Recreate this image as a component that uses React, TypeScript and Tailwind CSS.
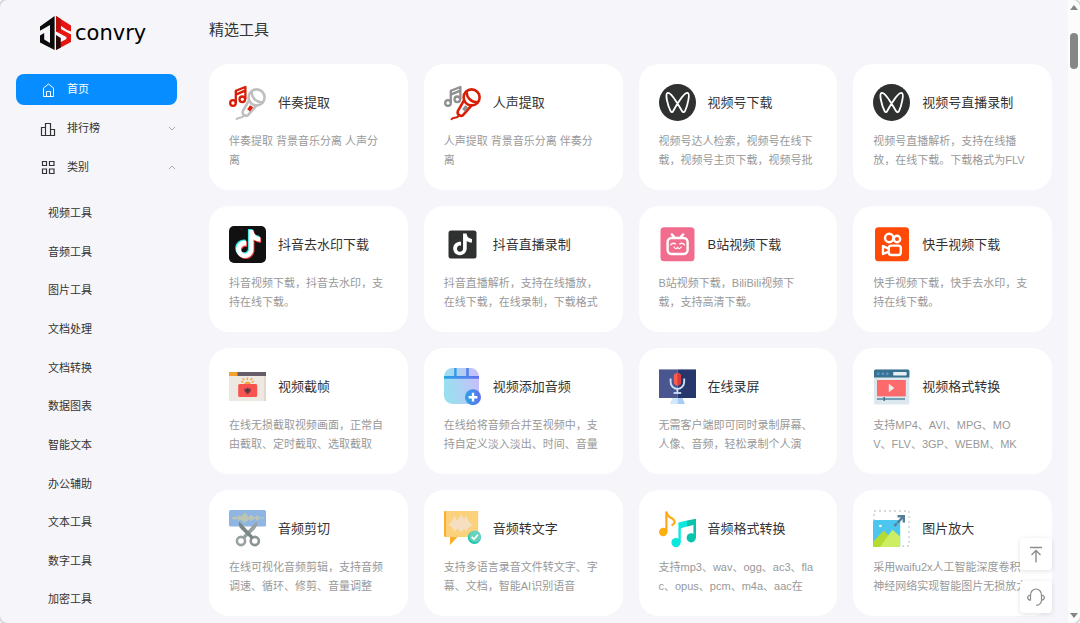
import {ReactNode} from "react";

type Tool = {
    name: string;
    lines: string[];
    icon: ReactNode;
}

const notePath = "M12.525.02c1.31-.02 2.61-.01 3.91-.02.08 1.53.63 3.09 1.75 4.17 1.12 1.11 2.7 1.62 4.24 1.79v4.03c-1.44-.05-2.89-.35-4.2-.97-.57-.26-1.1-.59-1.62-.93-.01 2.92.01 5.84-.02 8.75-.08 1.4-.54 2.79-1.35 3.94-1.31 1.92-3.58 3.17-5.91 3.21-1.43.08-2.86-.31-4.08-1.03-2.02-1.19-3.44-3.37-3.65-5.71-.02-.5-.03-1-.01-1.49.18-1.9 1.12-3.72 2.58-4.96 1.66-1.44 3.98-2.13 6.15-1.72.02 1.48-.04 2.96-.04 4.44-.99-.32-2.15-.23-3.02.37-.63.41-1.11 1.04-1.36 1.75-.21.51-.15 1.07-.14 1.61.24 1.64 1.82 3.02 3.5 2.87 1.12-.01 2.19-.66 2.77-1.61.19-.33.4-.67.41-1.06.1-1.79.06-3.57.07-5.36.01-4.03-.01-8.05.02-12.07z";

function Svg({children}: { children: ReactNode }) {
    return (
        <svg viewBox="0 0 37 37" className="size-[37px] shrink-0" fill="none" aria-hidden="true">
            {children}
        </svg>
    );
}

function MicIcon({notes, mic, slot}: { notes: string, mic: string, slot: string }) {
    return (
        <Svg>
            <g stroke={notes} strokeWidth="2.3">
                <circle cx="4" cy="19" r="2.8"/>
                <circle cx="13.3" cy="15.3" r="2.8"/>
                <path d="M6.8 19V6.8L16.4 3V15.3M6.8 10.6L16.1 6.6" strokeLinejoin="round"/>
            </g>
            <g stroke={mic} strokeWidth="2.6" strokeLinecap="round" strokeLinejoin="round">
                <circle cx="27.6" cy="13.4" r="8"/>
                <path d="M22.5 8.2C23 14 27 18 33.4 18.4"/>
                <path d="M20 16.4L13.8 27.2C13 30.4 16 33 18.8 31.4L27.6 21.4"/>
                <path d="M15 31.4C12.6 35.4 10 32.4 7.6 35.2" strokeWidth="2"/>
            </g>
            <path d="M22.6 22.2L19.6 26.4" stroke={slot} strokeWidth="3.6"/>
        </Svg>
    );
}

function ChannelsIcon() {
    return (
        <Svg>
            <circle cx="18.5" cy="18.5" r="18.5" fill="#2f3130"/>
            <path
                d="M11.4 26.6C9 22 5.6 9.4 8.6 8.8C12 8.2 15.6 15 18.5 19.6L23 27C24 28.6 25.4 28.4 26.2 26.6C28.4 22 31.6 9.4 28.6 8.8C25.2 8.2 21.6 15 18.5 19.6L14.2 27C13.4 28.6 12.2 28.4 11.4 26.6z"
                stroke="#fff" strokeWidth="1.8"/>
        </Svg>
    );
}

const tools: Tool[] = [
    {
        name: "伴奏提取",
        lines: ["伴奏提取 背景音乐分离 人声分", "离"],
        icon: <MicIcon notes="#d81e06" mic="#bfbfbf" slot="#d81e06"/>,
    },
    {
        name: "人声提取",
        lines: ["人声提取 背景音乐分离 伴奏分", "离"],
        icon: <MicIcon notes="#8f8f8f" mic="#d81e06" slot="#8f8f8f"/>,
    },
    {
        name: "视频号下载",
        lines: ["视频号达人检索，视频号在线下", "载，视频号主页下载，视频号批"],
        icon: <ChannelsIcon/>,
    },
    {
        name: "视频号直播录制",
        lines: ["视频号直播解析，支持在线播", "放，在线下载。下载格式为FLV"],
        icon: <ChannelsIcon/>,
    },
    {
        name: "抖音去水印下载",
        lines: ["抖音视频下载，抖音去水印，支", "持在线下载。"],
        icon: (
            <Svg>
                <rect width="37" height="37" rx="5" fill="#111"/>
                <path d={notePath} fill="#25e5e0" transform="translate(4.4 3) scale(1.16)"/>
                <path d={notePath} fill="#f0443c" transform="translate(6.2 5.2) scale(1.16)"/>
                <path d={notePath} fill="#fff" transform="translate(5.3 4.1) scale(1.16)"/>
            </Svg>
        ),
    },
    {
        name: "抖音直播录制",
        lines: ["抖音直播解析，支持在线播放，", "在线下载，在线录制，下载格式"],
        icon: (
            <Svg>
                <rect x="4.5" y="4.5" width="28" height="28" rx="2.5" fill="#2f3130"/>
                <path d={notePath} fill="#fff" transform="translate(7.8 7.6) scale(.9)"/>
            </Svg>
        ),
    },
    {
        name: "B站视频下载",
        lines: ["B站视频下载，BiliBili视频下", "载，支持高清下载。"],
        icon: (
            <Svg>
                <rect x="1.5" y="1.2" width="34" height="34" rx="3.5" fill="#f16c8d"/>
                <g stroke="#fff" strokeLinecap="round">
                    <rect x="8.6" y="12" width="20" height="16" rx="4" strokeWidth="2.4"/>
                    <path d="M12.8 8.4L15.2 11M24.2 8.4L21.8 11" strokeWidth="2.4"/>
                    <path d="M11.8 18.8Q14 16.2 16.4 17.8M25.4 18.8Q23.2 16.2 20.8 17.8" strokeWidth="1.4"/>
                    <path d="M15 21Q17 24 18.6 21.4Q20.2 24 22.2 21" strokeWidth="1.2"/>
                </g>
            </Svg>
        ),
    },
    {
        name: "快手视频下载",
        lines: ["快手视频下载，快手去水印，支", "持在线下载。"],
        icon: (
            <Svg>
                <rect x="2" y="1.2" width="34" height="34" rx="3.5" fill="#ff4906"/>
                <g stroke="#fff" strokeWidth="2.4" strokeLinejoin="round">
                    <circle cx="16.2" cy="12" r="4.2"/>
                    <circle cx="24" cy="13" r="3.2"/>
                    <rect x="15.8" y="19.6" width="12" height="9.4" rx="2.5"/>
                    <path d="M15.4 22.6L10 20V28L15.4 25.8"/>
                </g>
            </Svg>
        ),
    },
    {
        name: "视频截帧",
        lines: ["在线无损截取视频画面，正常自", "由截取、定时截取、选取截取"],
        icon: (
            <Svg>
                <rect y="4" width="37" height="29" fill="#eee8e2"/>
                <path d="M35 8H37V33H35z" fill="#e2d8ce"/>
                <rect y="4" width="37" height="4" fill="#665c68"/>
                <rect y="4" width="8.5" height="4" fill="#f6a02d"/>
                <path d="M12 13L14.4 14.4M13.6 10.4L15.6 12M18.4 9.4V12M23.4 10.4L21.4 12M25 13L22.6 14.4"
                      stroke="#f5a742" strokeWidth="1.4"/>
                <path d="M15.4 16.6A3.2 3.2 0 0 1 21.8 16.6z" fill="#f5a742"/>
                <rect x="9.2" y="16" width="19" height="13" rx="1.5" fill="#f8544f"/>
                <path d="M15.4 20.4H17.6L18.6 19.4L19.6 20.4H21.8V23.2L18.6 26.4L15.4 23.2z" fill="#7a3a48"/>
                <circle cx="18.6" cy="22.4" r="1.2" fill="#3e3544"/>
            </Svg>
        ),
    },
    {
        name: "视频添加音频",
        lines: ["在线给将音频合并至视频中，支", "持自定义淡入淡出、时间、音量"],
        icon: (
            <Svg>
                <defs>
                    <linearGradient id="film" x1="0" x2="1" y1=".3" y2=".1">
                        <stop stopColor="#98e0ef"/>
                        <stop offset="1" stopColor="#cabdfa"/>
                    </linearGradient>
                    <linearGradient id="plus">
                        <stop stopColor="#27a4e6"/>
                        <stop offset="1" stopColor="#6470f0"/>
                    </linearGradient>
                </defs>
                <rect width="35" height="36" rx="8.5" fill="url(#film)"/>
                <path d="M0 8H35V10.8H0z" fill="url(#plus)"/>
                <path d="M10.2 0H12.6V8H10.2z" fill="#2f9be8"/>
                <path d="M22.2 0H24.8V8H22.2z" fill="#5681ed"/>
                <circle cx="29" cy="29.2" r="8" fill="url(#plus)"/>
                <path d="M29 24.8V33.6M24.6 29.2H33.4" stroke="#fff" strokeWidth="2.4"/>
            </Svg>
        ),
    },
    {
        name: "在线录屏",
        lines: ["无需客户端即可同时录制屏幕、", "人像、音频，轻松录制个人演"],
        icon: (
            <Svg>
                <path d="M13.5 30H18.5V36H10.8z" fill="#d4e8fb"/>
                <path d="M18.5 30H23.5L26 36H18.5z" fill="#a9cdf5"/>
                <path d="M0 1.4H18.5V30H0z" fill="#4a568f"/>
                <path d="M18.5 1.4H37V30H18.5z" fill="#27376c"/>
                <path d="M11.6 10.5V14A6.8 7 0 0 0 25.2 14V10.5M18.4 21V25" stroke="#cfe3fa" strokeWidth="1.8"/>
                <path d="M14.6 25H22.2" stroke="#cfe3fa" strokeWidth="1.8"/>
                <rect x="14.8" y="5" width="7.2" height="12.4" rx="3.6" fill="#fb5d4c"/>
                <path d="M18.4 5A3.6 3.6 0 0 1 22 8.6V13.8A3.6 3.6 0 0 1 18.4 17.4z" fill="#d93b3d"/>
            </Svg>
        ),
    },
    {
        name: "视频格式转换",
        lines: ["支持MP4、AVI、MPG、MO", "V、FLV、3GP、WEBM、MK"],
        icon: (
            <Svg>
                <rect x="1" y="1.4" width="35.4" height="35" rx="1.5" fill="#dce8ee"/>
                <path d="M1 9.4V3Q1 1.4 2.6 1.4H34.8Q36.4 1.4 36.4 3V9.4z" fill="#38708f"/>
                <rect x="20.2" y="4" width="13.4" height="3.4" rx=".6" fill="#e6f0f4"/>
                <g fill="#5594c8">
                    <circle cx="5.2" cy="5.8" r="1.5"/>
                    <circle cx="9.8" cy="5.8" r="1.5"/>
                    <circle cx="14.2" cy="5.8" r="1.5"/>
                </g>
                <rect x="4" y="12" width="28.8" height="16.4" fill="#fd6a6c"/>
                <path d="M15.8 15.8L21.4 20L15.8 24.2z" fill="#e9eef2"/>
                <path d="M4 31H32" stroke="#5c8ba4" strokeWidth="1.6"/>
                <path d="M11.2 29V33" stroke="#38708f" strokeWidth="1.4"/>
            </Svg>
        ),
    },
    {
        name: "音频剪切",
        lines: ["在线可视化音频剪辑，支持音频", "调速、循环、修剪、音量调整"],
        icon: (
            <Svg>
                <rect y="0" width="37" height="16.4" rx="1.5" fill="#8fb5e2"/>
                <path
                    d="M3 8H5M6 6.4V9.6M8 7V9M10 5.4V10.6M12 6V10M14 4.4V11.6M16 3V12.6M18 5V11M20 6.6V9.4M22 5V11M24 6.2V9.8M26 7V9M28 5.4V10.6M30 6.6V9.4M32 8H35"
                    stroke="#d9cf93" strokeWidth="1.2"/>
                <g stroke="#8b9494" strokeWidth="2.6">
                    <circle cx="12" cy="31" r="4.1" stroke="#98a1a1"/>
                    <circle cx="25.8" cy="31" r="4.1"/>
                </g>
                <path d="M27.6 11.4Q29.4 15 26 19L15.4 29.2L12.8 27.2z" fill="#98a1a1"/>
                <path d="M10.4 11.4Q8.6 15 12 19L22.4 29.2L25 27.2z" fill="#7d8686"/>
            </Svg>
        ),
    },
    {
        name: "音频转文字",
        lines: ["支持多语言录音文件转文字、字", "幕、文档，智能AI识别语音"],
        icon: (
            <Svg>
                <path d="M0 2Q0 1 1 1H6V27H1Q0 27 0 25z" fill="#f9ae2b"/>
                <path d="M6 26V35L13.4 27z" fill="#f9ae2b"/>
                <path d="M2 1H34.2V27H3Q2 27 2 26z" fill="#fbd17c"/>
                <path d="M4.6 14.8L8 11L10.4 5.6L13 11L15.6 7L17.6 4.6L20 9L22.2 5.6L24.6 11.4L28.6 14.8L24.6 18L22.2 21.6L20 18.4L17.4 22.6L13.4 18.4L10.6 21.6L8 17.6z"
                      fill="#f6dfc0"/>
                <circle cx="30.4" cy="27.4" r="6.5" fill="#19c4ae"/>
                <circle cx="31" cy="26.4" r="5.8" fill="#68d2bd"/>
                <path d="M27.6 26.8L30 29L34 24.6" stroke="#fff" strokeWidth="1.6"/>
            </Svg>
        ),
    },
    {
        name: "音频格式转换",
        lines: ["支持mp3、wav、ogg、ac3、fla", "c、opus、pcm、m4a、aac在"],
        icon: (
            <Svg>
                <circle cx="4.2" cy="22" r="4.2" fill="#ffb00c"/>
                <path d="M7.4 22V1.4Q8 6.4 13.4 8.6Q18.4 12.4 12.6 15.4" stroke="#ffa914" strokeWidth="2.2"/>
                <circle cx="17" cy="32.6" r="4.6" fill="#0ce8dc"/>
                <circle cx="32.2" cy="27.8" r="4.6" fill="#0ac3ac"/>
                <path d="M19.4 12.6L28 10.4V16.4L21.8 18.2V32.6H19.4z" fill="#0ce8dc"/>
                <path d="M28 10.4L37 8.8V28H34.4V15L28 16.6z" fill="#0ac3ac"/>
            </Svg>
        ),
    },
    {
        name: "图片放大",
        lines: ["采用waifu2x人工智能深度卷积", "神经网络实现智能图片无损放大"],
        icon: (
            <Svg>
                <rect x="1" y="1" width="35" height="35" stroke="#d6dadd" strokeWidth="1.8"
                      strokeDasharray="2 3"/>
                <rect y="10" width="27.2" height="27" rx="1.5" fill="#4ac6ef"/>
                <circle cx="7.4" cy="16" r="1.3" fill="#fff"/>
                <path d="M0 32L10.6 20.4L17 27V37H1.5Q0 37 0 35.5z" fill="#b4db32"/>
                <path d="M7 37L19.4 19.8L27.2 26.6V35.5Q27.2 37 25.7 37z" fill="#cdee62"/>
                <path d="M21.4 16L30.4 6.6" stroke="#557f97" strokeWidth="2.4" strokeDasharray="3.4 .8 20"/>
                <path d="M24.6 5H32V12.4H29.6V7.4H24.6z" fill="#557f97"/>
            </Svg>
        ),
    },
];

const categories = [
    "视频工具",
    "音频工具",
    "图片工具",
    "文档处理",
    "文档转换",
    "数据图表",
    "智能文本",
    "办公辅助",
    "文本工具",
    "数字工具",
    "加密工具",
];

function Logo() {
    return (
        <a href="#" className="flex items-center gap-1 pl-6 text-black">
            <svg viewBox="0 0 31 34" className="h-[34px] w-[31px]" aria-hidden="true">
                <path d="M0 10.4L14.6 0V34L0 26.4V19.4L4.2 17V23.6L10 27V9L0 14.8z" fill="#0b0b0b"/>
                <path d="M16 0L31 9.4V15.6L27 14L20.8 9.8V13L31 18.6V26L16 34V28.4L26.4 23V21L16 15.6z"
                      fill="#e8140f"/>
                <path d="M16 0L20.8 3V15L16 15.6z" fill="#b80f0c"/>
                <path d="M16 19L20.8 22V31.4L16 34z" fill="#2a0808"/>
            </svg>
            <span className="font-['DejaVu_Sans',sans-serif] text-[21px] leading-[34px]">convry</span>
        </a>
    );
}

function Chevron({up}: { up?: boolean }) {
    return (
        <svg viewBox="0 0 8 8" className="ml-auto size-2" fill="none" stroke="#a8a8ac" aria-hidden="true">
            <path d={up ? "M1 5L4 2L7 5" : "M1 2L4 5L7 2"}/>
        </svg>
    );
}

function Sidebar() {
    return (
        <aside className="w-[193px] shrink-0 px-4 pt-4">
            <Logo/>
            <nav className="mt-6 text-[11px] text-[#333]">
                <div className="flex flex-col gap-2">
                    <a href="#" className="flex h-[31px] items-center gap-[11px] rounded-lg bg-[#078dff] pl-6 text-white">
                        <svg viewBox="0 0 16 16" className="size-4" fill="none" stroke="currentColor" aria-hidden="true">
                            <path d="M3.5 14.5V6L8.5 2L13.5 6V14.5zM6.5 14.5V9.5H10.5V14.5"/>
                        </svg>
                        首页
                    </a>
                    <button type="button" className="flex h-[31px] items-center gap-[11px] pr-[1px] pl-6">
                        <svg viewBox="0 0 16 16" className="size-4" fill="none" stroke="currentColor" strokeWidth="1.2" aria-hidden="true">
                            <path d="M1.5 14.5V6.5H5.5V14.5zM5.5 14.5V2.5H10.5V14.5zM10.5 14.5V8.5H14.5V14.5z"/>
                        </svg>
                        排行榜
                        <Chevron/>
                    </button>
                    <button type="button" className="flex h-[31px] items-center gap-[11px] pr-[1px] pl-6">
                        <svg viewBox="0 0 16 16" className="size-4" fill="none" stroke="currentColor" strokeWidth="1.2" aria-hidden="true">
                            <path d="M2.5 1.5H6.5V5.5H2.5zM9.5 1.5H14V5.5H9.5zM2.5 9H6.5V13.5H2.5zM9.5 9H14V13.5H9.5z"/>
                        </svg>
                        类别
                        <Chevron up/>
                    </button>
                </div>
                <ul className="mt-[11px] grid h-[425px] auto-rows-fr">
                    {categories.map((category) => (
                        <li key={category} className="flex items-center pl-8">
                            <a href="#">{category}</a>
                        </li>
                    ))}
                </ul>
            </nav>
        </aside>
    );
}

function ToolCard({name, lines, icon}: Tool) {
    return (
        <a href="#" className="min-w-0 rounded-[20px] bg-white p-5">
            <div className="flex items-center gap-3">
                {icon}
                <h2 className="text-[13px] whitespace-nowrap text-[#333]">{name}</h2>
            </div>
            <p className="mt-[11px] h-[38px] text-[11px] leading-[19px] whitespace-nowrap text-[#999]">
                {lines.map((line) => (
                    <span key={line} className="block">{line}</span>
                ))}
            </p>
        </a>
    );
}

function FloatButtons() {
    return (
        <div className="absolute right-7 bottom-[10px] flex flex-col gap-[11px] text-[#8c8c8c]">
            <button type="button" aria-label="返回顶部"
                    className="flex size-8 items-center justify-center rounded-sm bg-white shadow-[0_1px_5px_rgba(0,0,0,0.12)]">
                <svg viewBox="0 0 18 18" className="size-[18px]" fill="none" stroke="currentColor" strokeWidth="1.4" aria-hidden="true">
                    <path d="M3 2.5H15M9 17.5V5.5M4.5 10L9 5.5L13.5 10"/>
                </svg>
            </button>
            <button type="button" aria-label="客服"
                    className="flex size-8 items-center justify-center rounded-sm bg-white shadow-[0_1px_5px_rgba(0,0,0,0.12)]">
                <svg viewBox="0 0 18 18" className="size-[18px]" fill="none" stroke="currentColor" strokeWidth="1.2" aria-hidden="true">
                    <path d="M3.5 12.5V7A5.5 6 0 0 1 14.5 7V12.5Q14 17 9 17.4M3.5 7Q.7 7.4 .7 9.6T3.5 12.4M14.5 7Q17.3 7.4 17.3 9.6T14.5 12.4"/>
                </svg>
            </button>
        </div>
    );
}

function ScrollBar() {
    return (
        <div className="flex w-3 shrink-0 flex-col items-center justify-between bg-[#fcfcfc] py-[5px]" aria-hidden="true">
            <div className="flex flex-col items-center gap-[23px]">
                <svg viewBox="0 0 8 5" className="h-[5px] w-2" fill="#858786"><path d="M4 0L8 5H0z"/></svg>
                <div className="h-9 w-2 rounded-full bg-[#858786]"/>
            </div>
            <svg viewBox="0 0 8 5" className="h-[5px] w-2" fill="#858786"><path d="M0 0H8L4 5z"/></svg>
        </div>
    );
}

function App() {
    return (
        <div className="h-screen overflow-hidden bg-white font-['Liberation_Sans','Noto_Sans_CJK_SC',sans-serif]">
            <div className="relative flex h-full overflow-hidden rounded-lg bg-[#f5f5fa] shadow-[0_0_0_2px_#d9d9d9]">
                <Sidebar/>
                <main className="min-w-0 flex-1 px-4 pt-[18px]">
                    <h1 className="text-[15px] leading-6 text-[#333]">精选工具</h1>
                    <div className="mt-[22px] grid grid-cols-4 gap-4">
                        {tools.map((tool) => (
                            <ToolCard key={tool.name} {...tool}/>
                        ))}
                    </div>
                </main>
                <ScrollBar/>
                <FloatButtons/>
            </div>
        </div>
    );
}

export default App;
